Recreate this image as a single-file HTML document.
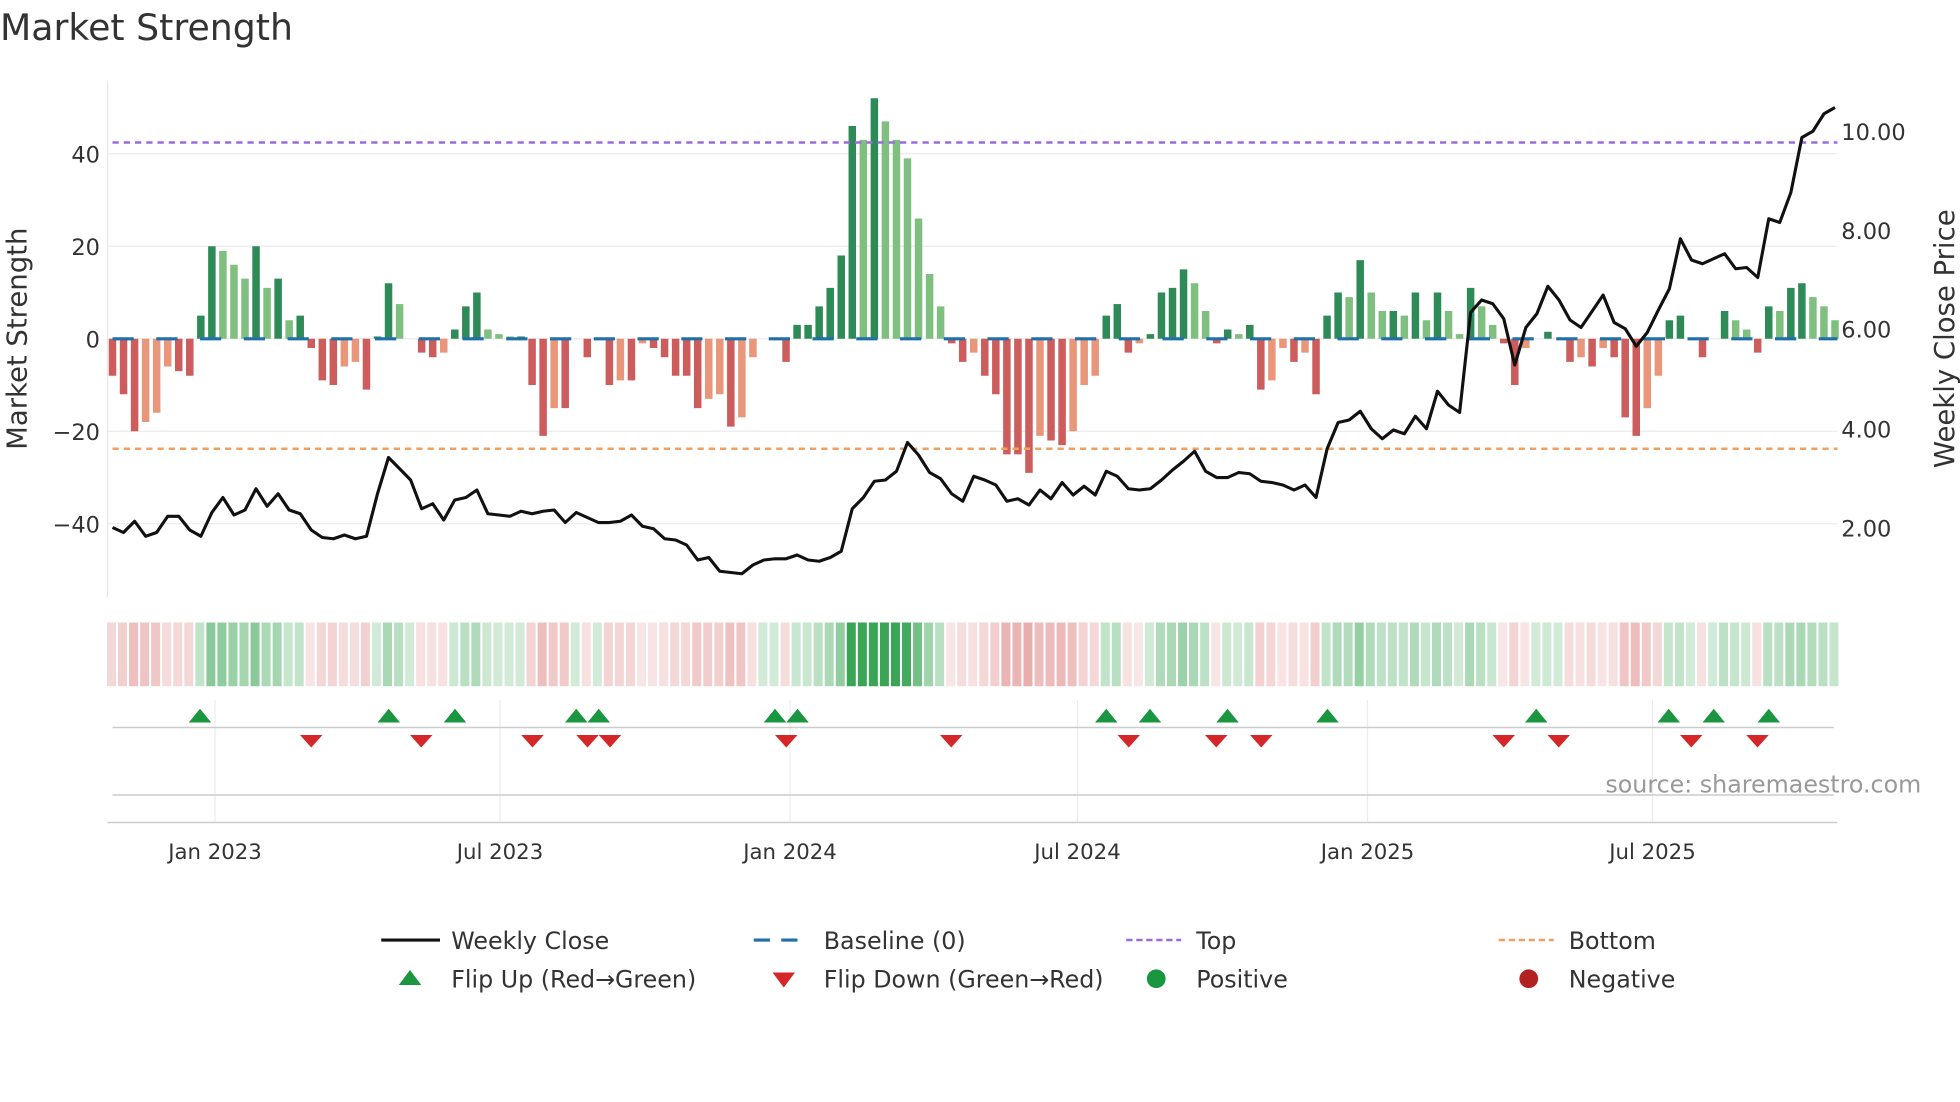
<!DOCTYPE html>
<html><head><meta charset="utf-8"><style>
html,body{margin:0;padding:0;background:#fff;}
svg{display:block;font-family:"DejaVu Sans","Liberation Sans",sans-serif;}
</style></head><body>
<svg id="s" width="1960" height="1102" viewBox="0 0 1568 881.6" xmlns="http://www.w3.org/2000/svg">
<text x="0" y="32" font-size="29" fill="#333">Market Strength</text>
<g stroke="#ececec" stroke-width="1">
<line x1="86" y1="123" x2="1470" y2="123"/><line x1="86" y1="197" x2="1470" y2="197"/><line x1="86" y1="271" x2="1470" y2="271"/><line x1="86" y1="345" x2="1470" y2="345"/><line x1="86" y1="419" x2="1470" y2="419"/>
<line x1="172" y1="560" x2="172" y2="658"/><line x1="400" y1="560" x2="400" y2="658"/><line x1="632" y1="560" x2="632" y2="658"/><line x1="862" y1="560" x2="862" y2="658"/><line x1="1094" y1="560" x2="1094" y2="658"/><line x1="1322" y1="560" x2="1322" y2="658"/>
</g>
<line x1="86" y1="65" x2="86" y2="478" stroke="#e6e6e6"/>
<g font-size="18" fill="#333" text-anchor="end">
<text x="80" y="130">40</text><text x="80" y="204">20</text><text x="80" y="278">0</text><text x="80" y="352">−20</text><text x="80" y="426">−40</text></g>
<g font-size="18" fill="#333">
<text x="1473" y="112">10.00</text><text x="1473" y="191">8.00</text><text x="1473" y="270">6.00</text><text x="1473" y="350">4.00</text><text x="1473" y="429">2.00</text></g>
<text transform="translate(21,271) rotate(-90)" font-size="22" fill="#333" text-anchor="middle">Market Strength</text>
<text transform="translate(1563,271) rotate(-90)" font-size="22" fill="#333" text-anchor="middle">Weekly Close Price</text>
<g id="bars"></g>
<line x1="90" y1="271" x2="1470" y2="271" stroke="#1f6fa8" stroke-width="2.5" stroke-dasharray="17,18"/>
<line x1="90" y1="114" x2="1470" y2="114" stroke="#9b6bdb" stroke-width="2" stroke-dasharray="5,4"/>
<line x1="90" y1="359" x2="1470" y2="359" stroke="#f0a060" stroke-width="2" stroke-dasharray="5,4"/>
<polyline id="price" fill="none" stroke="#111" stroke-width="2.5" stroke-linejoin="round"/>
<g id="heat"></g>
<line x1="90" y1="582" x2="1467" y2="582" stroke="#ccc" stroke-width="1.2"/>
<line x1="90" y1="636" x2="1467" y2="636" stroke="#ccc" stroke-width="1.2"/>
<line x1="86" y1="658" x2="1470" y2="658" stroke="#ccc" stroke-width="1.2"/>
<g id="flips"></g>
<text x="1537" y="634" font-size="19" fill="#999" text-anchor="end">source: sharemaestro.com</text>
<g font-size="17" fill="#333" text-anchor="middle">
<text x="172" y="687">Jan 2023</text><text x="400" y="687">Jul 2023</text><text x="632" y="687">Jan 2024</text><text x="862" y="687">Jul 2024</text><text x="1094" y="687">Jan 2025</text><text x="1322" y="687">Jul 2025</text></g>
<g font-size="19" fill="#333">
<line x1="305" y1="752" x2="352" y2="752" stroke="#111" stroke-width="2.5"/><text x="361" y="759">Weekly Close</text>
<line x1="603" y1="752" x2="647" y2="752" stroke="#1f6fa8" stroke-width="2.5" stroke-dasharray="13,9"/><text x="659" y="759">Baseline (0)</text>
<line x1="901" y1="752" x2="945" y2="752" stroke="#9b6bdb" stroke-width="2" stroke-dasharray="5,3"/><text x="957" y="759">Top</text>
<line x1="1199" y1="752" x2="1243" y2="752" stroke="#f0a060" stroke-width="2" stroke-dasharray="5,3"/><text x="1255" y="759">Bottom</text>
<polygon points="319,788 328,776 337,788" fill="#1a9641"/><text x="361" y="790">Flip Up (Red→Green)</text>
<polygon points="618,778 627,790 636,778" fill="#d62728"/><text x="659" y="790">Flip Down (Green→Red)</text>
<circle cx="925" cy="783" r="7.5" fill="#1a9641"/><text x="957" y="790">Positive</text>
<circle cx="1223" cy="783" r="7.5" fill="#b22222"/><text x="1255" y="790">Negative</text>
</g>
</svg>
<script>
var v=[-8,-12,-20,-18,-16,-6,-7,-8,5,20,19,16,13,20,11,13,4,5,-2,-9,-10,-6,-5,-11,0.5,12,7.5,0.3,-3,-4,-3,2,7,10,2,1,0.5,0.5,-10,-21,-15,-15,0.3,-4,0.3,-10,-9,-9,-1,-2,-4,-8,-8,-15,-13,-12,-19,-17,-4,0.3,0.3,-5,3,3,7,11,18,46,43,52,47,43,39,26,14,7,-1,-5,-3,-8,-12,-25,-25,-29,-21,-22,-23,-20,-10,-8,5,7.5,-3,-1,1,10,11,15,12,6,-1,2,1,3,-11,-9,-2,-5,-3,-12,5,10,9,17,10,6,6,5,10,4,10,6,1,11,7,3,-1,-10,-2,0.3,1.5,0.3,-5,-4,-6,-2,-4,-17,-21,-15,-8,4,5,0.3,-4,0.3,6,4,2,-3,7,6,11,12,9,7,4];
var p=[422,426,417,429,426,413,413,424,429,410,398,412,408,391,405,395,408,411,424,430,431,428,431,429,395,366,375,384,407,403,416,400,398,392,411,412,413,409,411,409,408,418,410,414,418,418,417,412,421,423,431,432,436,448,446,457,458,459,452,448,447,447,444,448,449,446,441,407,398,385,384,377,354,364,378,383,395,401,381,384,388,401,399,404,392,399,386,396,389,396,377,381,391,392,391,384,376,369,361,377,382,382,378,379,385,386,388,392,388,398,359,338,336,329,343,351,344,347,333,343,313,324,330,250,240,243,255,292,262,251,229,240,256,262,249,236,258,263,277,266,248,231,191,208,211,207,203,215,214,222,175,178,154,110,105,91,86];
var n=v.length,st=(1468-90)/(n-1),NS="http://www.w3.org/2000/svg";
function el(t,a,par){var e=document.createElementNS(NS,t);for(var k in a)e.setAttribute(k,a[k]);document.getElementById(par).appendChild(e);}
for(var i=0;i<n;i++){var x=90+i*st,y=v[i],h=Math.abs(y)*3.7,prev=i?Math.abs(v[i-1]):0,same=i&&(v[i-1]>0)==(y>0);
var dark=!same||Math.abs(y)>=prev;var c=y>0?(dark?"#2e8b57":"#7fbf7f"):(dark?"#cd5c5c":"#e9967a");
if(Math.abs(y)>0.4)el("rect",{x:x-3,y:y>0?271-h:271,width:6,height:h,fill:c},"bars");
var a=Math.min(1,0.22+Math.abs(y)/40*0.75);
el("rect",{x:x-4.4,y:498,width:7.2,height:51,fill:y>0?"#3aa655":"#d97070","fill-opacity":y>0?a:a*0.75},"heat");}
var pts=[];for(var i=0;i<p.length;i++)pts.push((90+i*st).toFixed(1)+","+p[i]);
document.getElementById("price").setAttribute("points",pts.join(" "));
[160,311,364,461,479,620,638,885,920,982,1062,1229,1335,1371,1415].forEach(function(x){el("polygon",{points:(x-9)+",578 "+x+",567 "+(x+9)+",578",fill:"#1a9641"},"flips");});
[249,337,426,470,488,629,761,903,973,1009,1203,1247,1353,1406].forEach(function(x){el("polygon",{points:(x-9)+",588 "+x+",598 "+(x+9)+",588",fill:"#d62728"},"flips");});
</script>
</body></html>
